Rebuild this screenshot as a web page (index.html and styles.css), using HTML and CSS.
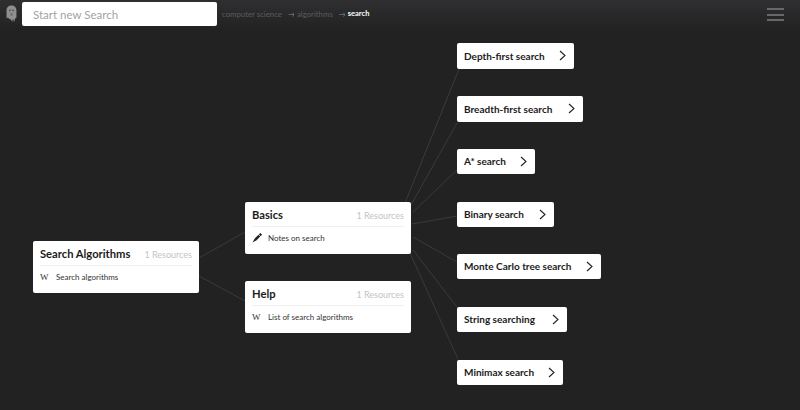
FILE: index.html
```html
<!DOCTYPE html>
<html lang="en">
<head>
<meta charset="utf-8">
<title>Search</title>
<link rel="stylesheet" href="styles.css">
</head>
<body>
<header class="topbar">
  <svg class="logo" viewBox="0 0 12 20" width="11" height="18" aria-hidden="true">
    <path d="M.5 6C.5 2.500 3 .5 6 .5s5.500 2 5.500 5.500v8l-1.500 1-.6 3.500-.9-3-.8 4-.9-4-.8 3-.8-3.200-.8 1.200L2 14l-1.500 1z" fill="#8f8f8f"/>
    <circle cx="4.300" cy="6" r=".9" fill="#444"/><circle cx="7.700" cy="6" r=".9" fill="#444"/>
    <path d="M5 9h2v3H5z" fill="#6a6a6a"/>
  </svg>
  <div class="search">Start new Search</div>
  <nav class="crumbs">
    <span class="crumb">computer science</span>
    <span class="arrow">→</span>
    <span class="crumb">algorithms</span>
    <span class="arrow">→</span>
    <span class="crumb current">search</span>
  </nav>
  <div class="menu"><i></i><i></i><i></i></div>
</header>
<main class="canvas">
  <svg class="links" width="800" height="410" viewBox="0 0 800 410" aria-hidden="true">
    <path d="M199 258L245 232M199 276L245 301M405 203L459 69M411 205L457 123M413 212L457 170M412 224L457 216M413 237L457 262M413 250L457 307M410 253L458 359"/>
  </svg>

  <section class="card card-root">
    <div class="card-head"><h2>Search Algorithms</h2><span class="count">1 Resources</span></div>
    <div class="card-row"><span class="wiki">W</span><span>Search algorithms</span></div>
  </section>
  <section class="card card-basics">
    <div class="card-head"><h2>Basics</h2><span class="count">1 Resources</span></div>
    <div class="card-row">
      <svg class="pen" viewBox="0 0 12 12" width="11" height="11" aria-hidden="true"><path d="M.5 11.500L3 7l4-4 2 2-4 4zM7.500 2.500L9 1l2 2-1.500 1.500z" fill="#222"/></svg>
      <span>Notes on search</span>
    </div>
  </section>
  <section class="card card-help">
    <div class="card-head"><h2>Help</h2><span class="count">1 Resources</span></div>
    <div class="card-row"><span class="wiki">W</span><span>List of search algorithms</span></div>
  </section>

  <a class="leaf l1"><span>Depth-first search</span><svg viewBox="0 0 7 11" width="7" height="11"><path d="M1 1l5 4.500L1 10"/></svg></a>
  <a class="leaf l2"><span>Breadth-first search</span><svg viewBox="0 0 7 11" width="7" height="11"><path d="M1 1l5 4.500L1 10"/></svg></a>
  <a class="leaf l3"><span>A* search</span><svg viewBox="0 0 7 11" width="7" height="11"><path d="M1 1l5 4.500L1 10"/></svg></a>
  <a class="leaf l4"><span>Binary search</span><svg viewBox="0 0 7 11" width="7" height="11"><path d="M1 1l5 4.500L1 10"/></svg></a>
  <a class="leaf l5"><span>Monte Carlo tree search</span><svg viewBox="0 0 7 11" width="7" height="11"><path d="M1 1l5 4.500L1 10"/></svg></a>
  <a class="leaf l6"><span>String searching</span><svg viewBox="0 0 7 11" width="7" height="11"><path d="M1 1l5 4.500L1 10"/></svg></a>
  <a class="leaf l7"><span>Minimax search</span><svg viewBox="0 0 7 11" width="7" height="11"><path d="M1 1l5 4.500L1 10"/></svg></a>
</main>
</body>
</html>
```
FILE: styles.css
```css
* { box-sizing: border-box; }
html, body { height: 100%; }
body {
  margin: 0;
  width: 800px;
  height: 410px;
  overflow: hidden;
  background: #222223;
  font-family: "Lato", "Open Sans", sans-serif;
  color: #1b1b1b;
}
.topbar {
  height: 30px;
  display: flex;
  align-items: flex-start;
  padding: 2px 16px 0 6px;
  background: linear-gradient(#2f2f31, #222223);
}
.logo { margin-top: 3px; flex: none; }
.search {
  width: 195px;
  height: 24px;
  margin-left: 5px;
  padding-left: 11px;
  background: #fff;
  border-radius: 2px;
  color: #a3a3a3;
  font-size: 11.500px;
  line-height: 25px;
}
.crumbs {
  display: flex;
  align-items: center;
  height: 23px;
  margin-left: 5px;
  font-size: 7.800px;
  color: #5c5c5c;
}
.arrow { margin: 0 3px 0 6px; width: 6px; overflow: hidden; color: #8a8a8a; font-size: 7px; }
.current { color: #fff; font-size: 7.500px; font-weight: 700; }
.menu { margin-left: auto; margin-top: 6px; display: flex; flex-direction: column; gap: 3.500px; }
.menu i { display: block; width: 17px; height: 2px; background: #686868; }
.canvas { position: absolute; inset: 0; }
.links { position: absolute; left: 0; top: 0; }
.links path { fill: none; stroke: #3a3a3b; stroke-width: 1; }
.card {
  position: absolute;
  width: 166px;
  height: 52px;
  padding: 0 7px;
  background: #fff;
  border-radius: 2px;
}
.card-root { left: 33px; top: 241px; }
.card-basics { left: 245px; top: 202px; }
.card-help { left: 245px; top: 281px; }
.card-head {
  height: 25px;
  display: flex;
  align-items: center;
  justify-content: space-between;
  border-bottom: 1px solid #efefef;
}
.card-head h2 { margin: 0; font-size: 11.200px; font-weight: 700; }
.count { margin-top: 2px; font-size: 9px; color: #c4c4c4; }
.card-row {
  height: 21px;
  display: flex;
  align-items: center;
  font-size: 8px;
  color: #333;
}
.wiki { width: 16px; font-family: "Liberation Serif", serif; font-size: 9px; }
.pen { width: 16px; padding-right: 5px; flex: none; }
.leaf {
  position: absolute;
  left: 457px;
  height: 25px;
  padding: 0 8px 1px 7px;
  display: flex;
  align-items: center;
  justify-content: space-between;
  background: #fff;
  border-radius: 2px;
  font-size: 10px;
  font-weight: 700;
}
.leaf svg { flex: none; fill: none; stroke: #222; stroke-width: 1.100; }
.l1 { top: 43px; width: 117px; height: 26px; }
.l2 { top: 96px; width: 126px; height: 26px; }
.l3 { top: 149px; width: 78px; }
.l4 { top: 202px; width: 97px; }
.l5 { top: 254px; width: 144px; }
.l6 { top: 307px; width: 110px; }
.l7 { top: 360px; width: 106px; }
```
